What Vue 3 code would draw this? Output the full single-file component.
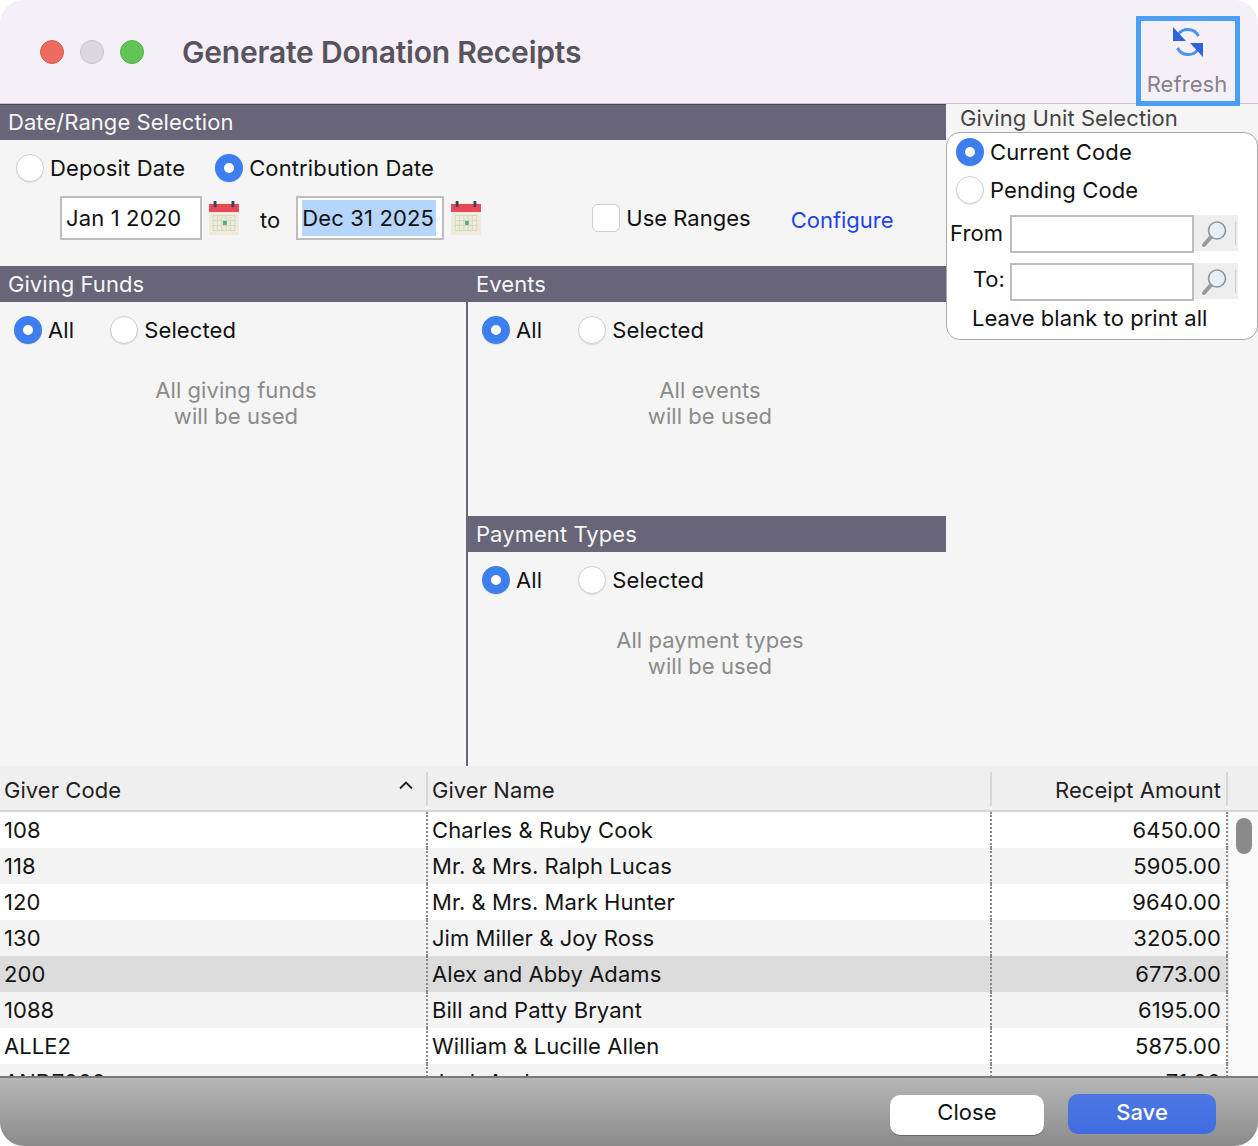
<script setup>
const rows = [
  { code: '108', name: 'Charles & Ruby Cook', amount: '6450.00' },
  { code: '118', name: 'Mr. & Mrs. Ralph Lucas', amount: '5905.00' },
  { code: '120', name: 'Mr. & Mrs. Mark Hunter', amount: '9640.00' },
  { code: '130', name: 'Jim Miller & Joy Ross', amount: '3205.00' },
  { code: '200', name: 'Alex and Abby Adams', amount: '6773.00', selected: true },
  { code: '1088', name: 'Bill and Patty Bryant', amount: '6195.00' },
  { code: 'ALLE2', name: 'William & Lucille Allen', amount: '5875.00' },
  { code: 'AND7000', name: 'Jack Anderson', amount: '71.00' }
];
const calendarCells = [0, 1, 2, 3];
</script>

<template>
  <div class="window">
    <header class="titlebar">
      <div class="lights">
        <span class="light red"></span>
        <span class="light grey"></span>
        <span class="light green"></span>
      </div>
      <h1 class="title">Generate Donation Receipts</h1>
      <button class="refresh">
        <svg width="36" height="36" viewBox="0 0 36 36">
          <path d="M8 10.5A12 12 0 0 1 28.5 12" fill="none" stroke="#4a94ee" stroke-width="3" />
          <path d="M28 25.5A12 12 0 0 1 7.5 24" fill="none" stroke="#4a94ee" stroke-width="3" />
          <path d="M3 3v14h13z" fill="#2f63d8" />
          <path d="M33 33V19H20z" fill="#2f63d8" />
        </svg>
        <span>Refresh</span>
      </button>
    </header>

    <div class="body">
      <div class="left">
        <section class="dates">
          <div class="bar">Date/Range Selection</div>
          <div class="date-type">
            <label class="opt"><span class="radio"></span>Deposit Date</label>
            <label class="opt"><span class="radio on"></span>Contribution Date</label>
          </div>
          <div class="date-row">
            <div class="field from-date">Jan 1 2020</div>
            <svg class="cal" width="30" height="34" viewBox="0 0 32 34" preserveAspectRatio="none">
              <rect y="2" width="32" height="32" fill="#ecebdc" />
              <rect y="3" width="32" height="8" fill="#e8495a" />
              <rect x="5" y="0" width="3" height="6" fill="#3c4252" />
              <rect x="24" y="0" width="3" height="6" fill="#3c4252" />
              <g fill="none" stroke="#d8d7c3">
                <rect x="4.5" y="14.5" width="23" height="15" />
                <path v-for="c in calendarCells" :key="c" :d="`M${9 + c * 4.6} 14v16`" />
                <path d="M4 19.5h24M4 24.5h24" />
              </g>
              <rect x="15" y="20" width="4" height="4" fill="#4fae8a" />
            </svg>
            <span class="to">to</span>
            <div class="field to-date"><span class="sel">Dec 31 2025</span></div>
            <svg class="cal" width="30" height="34" viewBox="0 0 32 34" preserveAspectRatio="none">
              <rect y="2" width="32" height="32" fill="#ecebdc" />
              <rect y="3" width="32" height="8" fill="#e8495a" />
              <rect x="5" y="0" width="3" height="6" fill="#3c4252" />
              <rect x="24" y="0" width="3" height="6" fill="#3c4252" />
              <g fill="none" stroke="#d8d7c3">
                <rect x="4.5" y="14.5" width="23" height="15" />
                <path v-for="c in calendarCells" :key="c" :d="`M${9 + c * 4.6} 14v16`" />
                <path d="M4 19.5h24M4 24.5h24" />
              </g>
              <rect x="15" y="20" width="4" height="4" fill="#4fae8a" />
            </svg>
            <label class="opt ranges"><span class="check"></span>Use Ranges</label>
            <a class="configure">Configure</a>
          </div>
        </section>

        <div class="lists">
          <section class="funds">
            <div class="bar">Giving Funds</div>
            <div class="all-sel">
              <label class="opt"><span class="radio on"></span>All</label>
              <label class="opt"><span class="radio"></span>Selected</label>
            </div>
            <p class="hint">All giving funds<br />will be used</p>
          </section>
          <div class="side">
            <section class="events">
              <div class="bar">Events</div>
              <div class="all-sel">
                <label class="opt"><span class="radio on"></span>All</label>
                <label class="opt"><span class="radio"></span>Selected</label>
              </div>
              <p class="hint">All events<br />will be used</p>
            </section>
            <section class="payments">
              <div class="bar">Payment Types</div>
              <div class="all-sel">
                <label class="opt"><span class="radio on"></span>All</label>
                <label class="opt"><span class="radio"></span>Selected</label>
              </div>
              <p class="hint">All payment types<br />will be used</p>
            </section>
          </div>
        </div>
      </div>

      <aside class="unit">
        <div class="unit-title">Giving Unit Selection</div>
        <div class="unit-box">
          <label class="opt code"><span class="radio on"></span>Current Code</label>
          <label class="opt code"><span class="radio"></span>Pending Code</label>
          <div class="lookup first">
            <span class="lookup-label">From</span>
            <div class="lookup-input"></div>
            <svg class="lookup-btn" width="44" height="36" viewBox="0 0 44 36">
              <path d="M41.5 7v23" stroke="#cfcfcf" />
              <path d="M17 22 10 30" stroke="#9a9a9a" stroke-width="4" stroke-linecap="round" />
              <circle cx="23" cy="15.5" r="8.5" fill="#e6f0f6" stroke="#8d969c" stroke-width="1.6" />
            </svg>
          </div>
          <div class="lookup">
            <span class="lookup-label">To:</span>
            <div class="lookup-input"></div>
            <svg class="lookup-btn" width="44" height="36" viewBox="0 0 44 36">
              <path d="M41.5 7v23" stroke="#cfcfcf" />
              <path d="M17 22 10 30" stroke="#9a9a9a" stroke-width="4" stroke-linecap="round" />
              <circle cx="23" cy="15.5" r="8.5" fill="#e6f0f6" stroke="#8d969c" stroke-width="1.6" />
            </svg>
          </div>
          <div class="blank">Leave blank to print all</div>
        </div>
      </aside>
    </div>

    <div class="table">
      <div class="thead">
        <div class="th code-col">Giver Code
          <svg class="sort" width="14" height="9" viewBox="0 0 14 9">
            <path d="M1 7.5 7 1.5l6 6" fill="none" stroke="#222" stroke-width="1.8" />
          </svg>
        </div>
        <div class="th name-col">Giver Name</div>
        <div class="th amount-col">Receipt Amount</div>
      </div>
      <div class="tbody">
        <div class="rows">
          <div v-for="r in rows" :key="r.code" class="tr" :class="{ selected: r.selected }">
            <div class="td code-col">{{ r.code }}</div>
            <div class="td name-col">{{ r.name }}</div>
            <div class="td amount-col">{{ r.amount }}</div>
          </div>
        </div>
        <div class="scroll"><span class="thumb"></span></div>
      </div>
    </div>

    <footer class="footer">
      <button class="btn close">Close</button>
      <button class="btn save">Save</button>
    </footer>
  </div>
</template>

<style scoped>
.window {
  width: 1258px;
  height: 1146px;
  display: flex;
  flex-direction: column;
  border-radius: 24px;
  overflow: hidden;
  background: #f5f5f5;
  font-family: Inter, "Liberation Sans", sans-serif;
  font-size: 22px;
  letter-spacing: 0.06px;
  color: #111;
}

.titlebar {
  height: 104px;
  flex: none;
  box-sizing: border-box;
  display: flex;
  align-items: center;
  background: #f5f0f8;
  border-bottom: 1px solid #c9c7cc;
  position: relative;
  z-index: 2;
}

.lights {
  display: flex;
  gap: 16px;
  margin-left: 40px;
}

.light {
  width: 24px;
  height: 24px;
  border-radius: 50%;
  box-sizing: border-box;
}

.red { background: #ee6b5f; border: 1px solid #d65a50; }
.grey { background: #dcd8df; border: 1px solid #c8c4cb; }
.green { background: #61c454; border: 1px solid #52ad46; }

.title {
  margin: 0 0 0 38px;
  font-size: 30px;
  font-weight: 600;
  color: #58545d;
  letter-spacing: -0.2px;
}

.refresh {
  margin-left: auto;
  margin-right: 18px;
  width: 104px;
  height: 90px;
  align-self: flex-end;
  margin-bottom: -3px;
  box-sizing: border-box;
  border: 5px solid #489ff5;
  background: transparent;
  padding: 3px 2px 0 0;
  display: flex;
  flex-direction: column;
  align-items: center;
  font: inherit;
  letter-spacing: inherit;
  color: #85838a;
}

.refresh svg {
  margin-left: 2px;
}

.refresh span {
  margin-top: 11px;
  line-height: 26px;
}

.body {
  height: 662px;
  flex: none;
  display: flex;
}

.left {
  width: 946px;
  flex: none;
  display: flex;
  flex-direction: column;
}

.bar {
  height: 36px;
  box-sizing: border-box;
  padding-left: 8px;
  line-height: 36px;
  background: #676577;
  color: #f6f6f6;
}

.dates {
  height: 162px;
  flex: none;
}

.dates > .bar {
  border-top: 1px solid #4a4858;
  line-height: 35px;
}

.opt {
  display: flex;
  align-items: center;
  gap: 6px;
  line-height: 28px;
  letter-spacing: 0.12px;
}

.radio {
  width: 28px;
  height: 28px;
  flex: none;
  box-sizing: border-box;
  border-radius: 50%;
  background: #fff;
  border: 1px solid #cfcfcf;
  box-shadow: 0 1px 1px rgba(0, 0, 0, 0.08);
}

.radio.on {
  border: 9px solid #3e7ff0;
}

.check {
  width: 28px;
  height: 28px;
  flex: none;
  box-sizing: border-box;
  border-radius: 6px;
  background: #fff;
  border: 1px solid #cfcfcf;
}

.date-type {
  display: flex;
  gap: 30px;
  padding: 14px 0 0 16px;
}

.date-row {
  display: flex;
  align-items: center;
  height: 44px;
  margin-top: 14px;
  padding-left: 60px;
}

.field {
  height: 44px;
  box-sizing: border-box;
  background: #fff;
  border: 2px solid #bdbdbd;
  display: flex;
  align-items: center;
  padding-left: 4px;
  letter-spacing: 0.14px;
}

.from-date { width: 142px; }
.to-date { width: 148px; }

.sel {
  background: #b6d5fb;
  line-height: 36px;
  padding-right: 2px;
}

.cal {
  flex: none;
  margin-left: 7px;
}

.to {
  margin: 4px 16px 0 21px;
}

.ranges {
  margin-left: 111px;
  letter-spacing: 0;
}

.configure {
  margin-left: 40px;
  margin-top: 3px;
  color: #1f45e6;
  letter-spacing: 0;
}

.lists {
  height: 500px;
  display: flex;
}

.funds {
  width: 466px;
  flex: none;
}

.side {
  flex: 1;
  border-left: 2px solid #68667a;
}

.events {
  height: 250px;
}

.side .events .bar {
  margin-left: -2px;
  padding-left: 10px;
}

.all-sel {
  display: flex;
  gap: 36px;
  padding: 14px 0 0 14px;
}

.hint {
  margin: 33px 0 0;
  text-align: center;
  color: #8b8b8b;
  line-height: 26px;
}

.funds .hint { margin-left: 6px; }
.side .hint { margin-left: 6px; }

.unit {
  flex: 1;
}

.unit-title {
  height: 28px;
  line-height: 28px;
  padding-left: 14px;
  color: #444;
}

.unit-box {
  width: 312px;
  height: 208px;
  box-sizing: border-box;
  background: #fff;
  border: 1px solid #aaa;
  border-radius: 14px;
  padding: 5px 0 0;
}

.code {
  padding-left: 9px;
  height: 28px;
  margin-bottom: 10px;
}

.lookup {
  display: flex;
  align-items: flex-start;
  height: 38px;
  margin-top: 10px;
}

.lookup.first {
  margin-top: 11px;
}

.lookup-label {
  width: 63px;
  flex: none;
  line-height: 32px;
  text-align: right;
  padding-right: 5px;
  box-sizing: border-box;
}

.lookup.first .lookup-label {
  text-align: left;
  padding-left: 3px;
  line-height: 36px;
}

.lookup-input {
  width: 184px;
  height: 38px;
  box-sizing: border-box;
  border: 2px solid #bdbdbd;
  background: #fff;
}

.lookup-btn {
  flex: none;
  background: #eee;
}

.blank {
  padding: 3px 0 0 25px;
  line-height: 28px;
}

.table {
  flex: none;
  height: 310px;
  background: #f5f5f5;
  display: flex;
  flex-direction: column;
}

.thead {
  height: 46px;
  flex: none;
  box-sizing: border-box;
  display: flex;
  background: #efefef;
  border-bottom: 2px solid #d6d6d6;
  padding-right: 30px;
}

.th {
  display: flex;
  align-items: center;
  height: 34px;
  padding-top: 2px;
  margin-top: 6px;
  position: relative;
  color: #222;
  border-right: 2px solid #d8d8d8;
}

.th.name-col,
.td.name-col {
  padding-left: 4px;
}

.th.code-col,
.td.code-col {
  padding-left: 4px;
}

.code-col { width: 428px; box-sizing: border-box; flex: none; }
.name-col { width: 564px; box-sizing: border-box; flex: none; }
.amount-col { width: 236px; box-sizing: border-box; flex: none; justify-content: flex-end; text-align: right; padding-right: 5px; }

.sort {
  position: absolute;
  right: 13px;
  top: 9px;
}

.tbody {
  flex: 1;
  display: flex;
  min-height: 0;
}

.rows {
  width: 1228px;
  flex: none;
  overflow: hidden;
}

.tr {
  height: 36px;
  display: flex;
  background: #fff;
}

.tr:nth-child(even) {
  background: #f4f4f4;
}

.tr.selected {
  background: #dcdcdc;
}

.td {
  height: 36px;
  line-height: 36px;
  color: #141414;
  border-right: 2px dotted #8a8a8a;
}

.scroll {
  flex: 1;
  background: #fafafa;
  border-left: 1px solid #ececec;
  padding: 6px 0 0 7px;
}

.thumb {
  display: block;
  width: 16px;
  height: 36px;
  border-radius: 8px;
  background: #8a8a8a;
}

.footer {
  height: 70px;
  flex: none;
  box-sizing: border-box;
  border-top: 2px solid #7b7b7b;
  background: linear-gradient(#b7b7b7, #8b8b8b);
  display: flex;
  align-items: center;
  justify-content: flex-end;
  gap: 24px;
  padding: 6px 42px 0 0;
}

.btn {
  height: 40px;
  border: none;
  border-radius: 10px;
  font: inherit;
  letter-spacing: inherit;
  padding: 0 0 6px;
}

.close {
  width: 154px;
  background: #fff;
  color: #111;
  box-shadow: 0 1px 1px rgba(0, 0, 0, 0.3);
}

.save {
  width: 148px;
  margin-top: -2px;
  padding-bottom: 4px;
  background: linear-gradient(#4c78e4, #416ce0);
  color: #fff;
  font-weight: 500;
}
</style>

<style>
body {
  background: #fff;
}
</style>
